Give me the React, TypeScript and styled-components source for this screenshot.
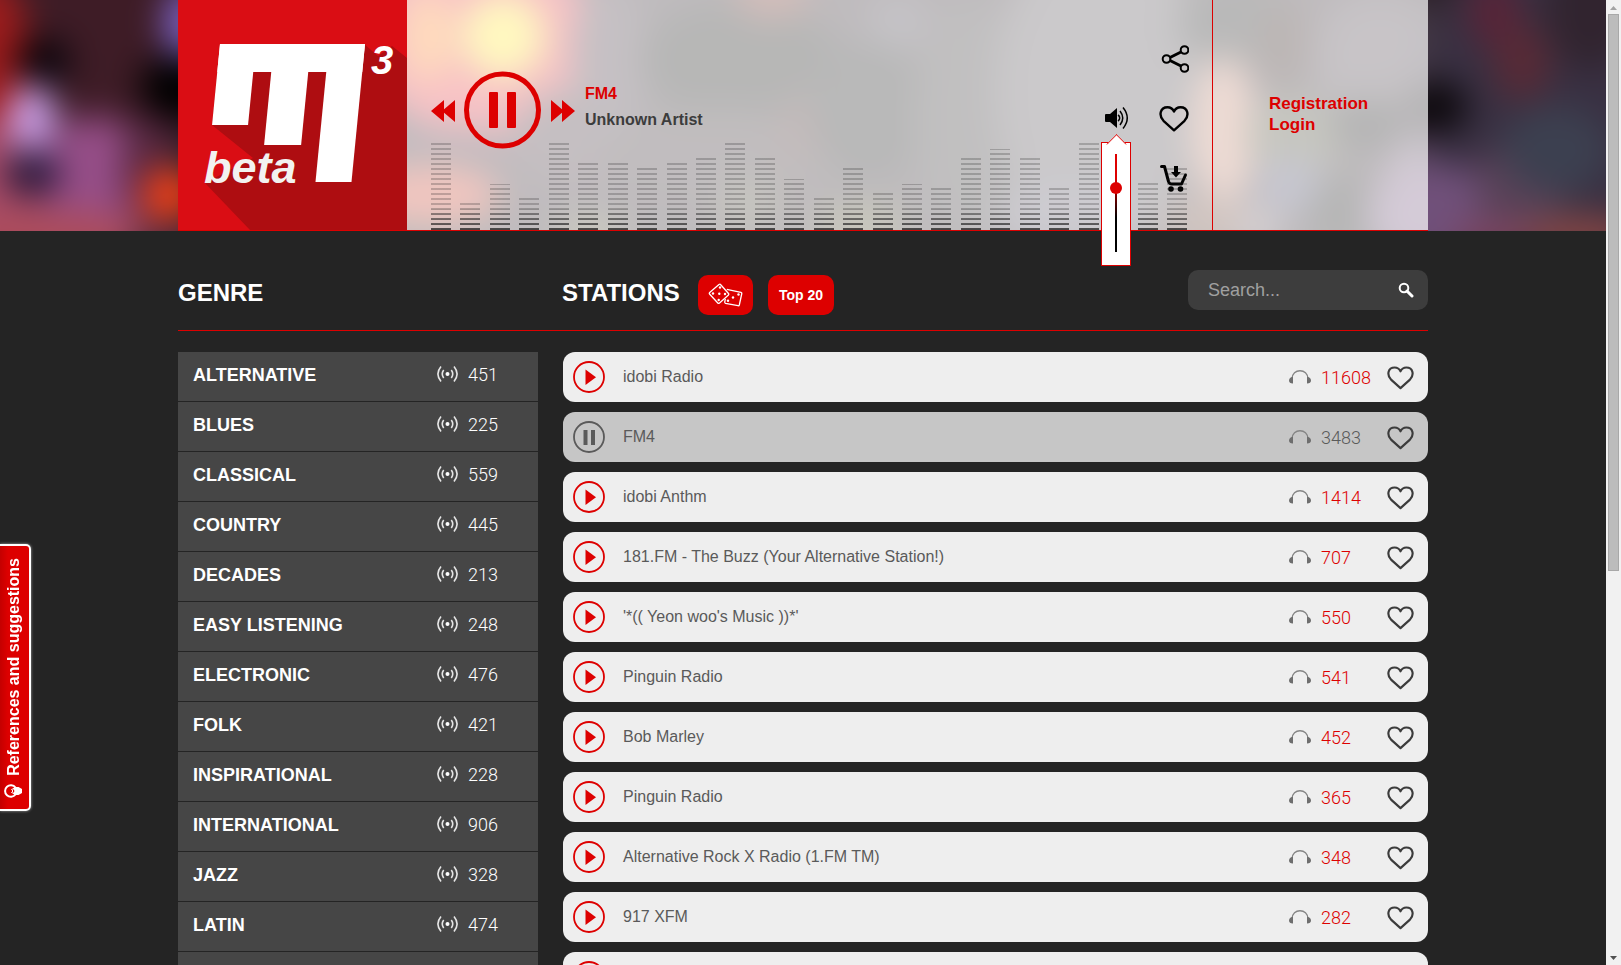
import React from 'react';
import styled, { createGlobalStyle } from 'styled-components';

const RED = '#dd0000';

const GlobalStyle = createGlobalStyle`
  * { box-sizing: border-box; }
  body {
    margin: 0;
    background: #242424;
    color: #fff;
    font-family: "Liberation Sans", Arial, Helvetica, sans-serif;
    font-size: 16px;
  }
  button { font: inherit; color: inherit; background: none; border: 0; padding: 0; cursor: pointer; }
  a { color: inherit; text-decoration: none; }
  ul { list-style: none; margin: 0; padding: 0; }
  svg { display: block; }
`;

/* ---------- page frame ---------- */

const Shell = styled.div`
  display: flex;
  height: 100vh;
`;

const Page = styled.div`
  flex: 1;
  min-width: 0;
  overflow: hidden;
`;

const ScrollRail = styled.div`
  display: flex;
  flex-direction: column;
  align-items: center;
  width: 15px;
  padding: 5px 0 4px;
  background: #f1f1f1;
`;

const ScrollThumb = styled.div`
  width: 11px;
  height: 557px;
  margin: 4px 0 auto;
  background: #bcbcbc;
  border: 1px solid #a8a8a8;
`;

const Container = styled.div`
  width: 100%;
  max-width: 1250px;
  margin: 0 auto;
`;

/* ---------- header ---------- */

const Header = styled.header`
  display: grid;
  > * { grid-area: 1 / 1; }
`;

const Backdrop = styled.svg`
  width: 100%;
  height: 231px;
`;

const HeaderPanel = styled(Container)`
  position: relative;
  display: flex;
  height: 231px;
  border-bottom: 1px solid ${RED};
`;

const Player = styled.section`
  flex: 1;
  min-width: 0;
  display: grid;
  background: rgba(255, 255, 255, 0.7);
  > * { grid-area: 1 / 1; }
`;

const Spectrum = styled.div`
  align-self: end;
  display: flex;
  justify-content: space-between;
  align-items: flex-end;
  padding: 0 25px 0 24px;
`;

const SpectrumBar = styled.span<{ $level: number }>`
  width: 20px;
  height: ${(p) => p.$level}px;
  background: linear-gradient(to top, rgba(20, 20, 20, 0.72), rgba(20, 20, 20, 0.4) 18px, rgba(20, 20, 20, 0.22) 22px);
  mask-image: repeating-linear-gradient(to top, #000 0 2px, transparent 2px 5px);
`;

const PlayerFront = styled.div`
  display: flex;
  justify-content: space-between;
  align-items: flex-start;
  padding: 0 23px 0 24px;
`;

const Transport = styled.div`
  display: flex;
  align-items: center;
  gap: 9px;
  padding-top: 71px;
  color: ${RED};
`;

const SkipButton = styled.button`
  padding-top: 2px;
`;

const NowPlaying = styled.div`
  align-self: flex-start;
  margin-top: 10px;
  padding-left: 1px;
  font-weight: bold;
  line-height: 26px;
`;

const StationTitle = styled.div`
  color: ${RED};
`;

const ArtistName = styled.div`
  color: #3c3c3c;
`;

const Actions = styled.div`
  display: flex;
  align-items: center;
  gap: 28px;
  padding-top: 29px;
  color: #000;
`;

const ActionColumn = styled.div`
  display: flex;
  flex-direction: column;
`;

const ActionButton = styled.button`
  display: flex;
  align-items: center;
  justify-content: center;
  width: 30px;
  height: 60px;
`;

const VolumeHolder = styled.div`
  position: relative;
`;

const VolumePopover = styled.div`
  position: absolute;
  z-index: 2;
  top: 53px;
  left: 0;
  display: flex;
  justify-content: center;
  width: 30px;
  height: 124px;
  padding-top: 11px;
  background: #fff;
  border: 1px solid ${RED};
  &::before {
    content: "";
    position: absolute;
    top: -8px;
    left: 7px;
    width: 14px;
    height: 14px;
    background: #fff;
    border: solid ${RED};
    border-width: 1px 0 0 1px;
    clip-path: polygon(0 0, 100% 0, 0 100%);
    transform: translateY(2px) rotate(45deg);
  }
`;

const VolumeSlider = styled.input`
  appearance: none;
  writing-mode: vertical-lr;
  direction: rtl;
  width: 12px;
  height: 98px;
  margin: 0;
  background: linear-gradient(${RED} 0 25%, #000 65%) center / 2px 100% no-repeat;
  &::-webkit-slider-thumb {
    appearance: none;
    width: 12px;
    height: 12px;
    border-radius: 50%;
    background: ${RED};
  }
`;

const Account = styled.nav`
  display: flex;
  flex-direction: column;
  flex: 0 0 216px;
  padding: 93px 0 0 56px;
  background: rgba(255, 255, 255, 0.7);
  border-left: 1px solid ${RED};
  color: ${RED};
  font-size: 17px;
  font-weight: bold;
  line-height: 21px;
`;

/* ---------- title bar ---------- */

const TitleBar = styled(Container)`
  display: flex;
  align-items: flex-start;
  gap: 15px;
  height: 100px;
  padding-top: 39px;
  border-bottom: 1px solid ${RED};
`;

const Title = styled.h2<{ $width: number }>`
  width: ${(p) => p.$width}px;
  margin: 0;
  font-size: 24px;
  line-height: 46px;
`;

const PillButton = styled.button<{ $width: number }>`
  display: flex;
  align-items: center;
  justify-content: center;
  width: ${(p) => p.$width}px;
  height: 40px;
  margin-top: 5px;
  border-radius: 10px;
  background: ${RED};
  font-size: 14px;
  font-weight: bold;
`;

const SearchForm = styled.form`
  display: flex;
  align-items: center;
  width: 240px;
  height: 40px;
  margin-left: auto;
  padding: 0 14px 0 20px;
  border-radius: 10px;
  background: #3d3d3d;
`;

const SearchInput = styled.input`
  flex: 1;
  min-width: 0;
  padding: 0;
  border: 0;
  outline: 0;
  background: none;
  color: #fff;
  font: inherit;
  font-size: 18px;
  &::placeholder { color: #a0a0a0; opacity: 1; }
`;

/* ---------- lists ---------- */

const Columns = styled(Container)`
  display: grid;
  grid-template-columns: 360px minmax(0, 1fr);
  gap: 25px;
  padding-top: 21px;
`;

const Count = styled.span`
  font-family: Roboto, "Liberation Sans", sans-serif;
  font-weight: 300;
  font-size: 18px;
`;

const GenreLink = styled.a`
  display: flex;
  align-items: center;
  height: 50px;
  padding: 0 0 4px 15px;
  background: #464646;
  border-bottom: 1px solid #242424;
  font-size: 18px;
  font-weight: bold;
`;

const GenreName = styled.span`
  padding-top: 2px;
`;

const GenreCount = styled.span`
  display: flex;
  align-items: center;
  gap: 10px;
  width: 101px;
  margin-left: auto;
`;

const StationList = styled.ul`
  display: flex;
  flex-direction: column;
  gap: 10px;
`;

const StationRow = styled.li<{ $active: boolean }>`
  display: flex;
  align-items: center;
  height: 50px;
  padding: 0 14px 0 10px;
  border-radius: 12px;
  background: ${(p) => (p.$active ? '#c6c6c6' : '#eeeeee')};
  color: ${(p) => (p.$active ? '#5a5a5a' : RED)};
`;

const StationName = styled.span`
  flex: 1;
  min-width: 0;
  padding: 0 18px;
  color: #5a5a5a;
  overflow: hidden;
  white-space: nowrap;
  text-overflow: ellipsis;
`;

const Listeners = styled.span`
  display: flex;
  align-items: center;
  gap: 10px;
  width: 98px;
`;

const HeartButton = styled.button`
  padding-top: 2px;
  color: #3c3c3c;
`;

/* ---------- feedback tab ---------- */

const FeedbackTab = styled.button`
  position: fixed;
  z-index: 3;
  top: 544px;
  left: 0;
  display: flex;
  flex-direction: column;
  align-items: flex-start;
  gap: 7px;
  width: 31px;
  height: 267px;
  padding: 12px 0 0 3px;
  border: 2px solid #fff;
  border-left: 0;
  border-radius: 0 5px 5px 0;
  background: linear-gradient(to right, #c40000, ${RED} 8px);
  box-shadow: 0 0 3px rgba(255, 255, 255, 0.6);
  font-weight: bold;
`;

const FeedbackLabel = styled.span`
  writing-mode: vertical-rl;
  transform: rotate(180deg);
  line-height: 21px;
`;

/* ---------- drawings ---------- */

type Blob = [number, number, number, number, string];

const BLOBS: Blob[] = [
  [90, 60, 140, 110, '#3e1c26'],
  [-14, 60, 44, 90, '#9c1c1c'],
  [0, 190, 80, 70, '#a84c68'],
  [95, 180, 54, 64, '#964e88'],
  [50, 240, 110, 30, '#ac4c5c'],
  [42, 62, 28, 24, '#08040a'],
  [32, 118, 24, 34, '#c8a0e8'],
  [32, 173, 28, 24, '#28183a'],
  [150, 170, 28, 54, '#562840'],
  [186, 25, 22, 40, '#7c64c8'],
  [178, 88, 38, 34, '#000000'],
  [170, 195, 28, 28, '#f04018'],
  [170, 244, 40, 14, '#5a2c48'],
  [480, 40, 116, 96, '#e43440'],
  [428, 36, 24, 46, '#ff8c20'],
  [503, 36, 42, 42, '#ffe82c'],
  [445, 150, 80, 22, '#341e2c'],
  [430, 195, 70, 30, '#d04028'],
  [570, 140, 60, 50, '#3c2832'],
  [608, 60, 36, 80, '#3e2e3a'],
  [590, 234, 36, 14, '#606030'],
  [740, 60, 100, 60, '#0e0e0c'],
  [772, -6, 38, 24, '#70241a'],
  [720, 155, 120, 46, '#302428'],
  [810, 125, 32, 32, '#3c1c1c'],
  [748, 205, 34, 24, '#403e28'],
  [870, 110, 60, 70, '#141414'],
  [898, 22, 30, 26, '#3e3844'],
  [860, 226, 50, 20, '#48481c'],
  [970, 120, 56, 120, '#302c2e'],
  [1100, 90, 106, 160, '#504a50'],
  [1070, 215, 74, 34, '#585264'],
  [1238, 25, 60, 44, '#161616'],
  [1224, 130, 32, 74, '#c88870'],
  [1208, 225, 44, 24, '#643c2c'],
  [1258, 228, 20, 20, '#806c74'],
  [1282, 45, 26, 44, '#200c08'],
  [1380, 55, 66, 64, '#463a44'],
  [1295, 135, 50, 38, '#42422c'],
  [1290, 185, 32, 28, '#444466'],
  [1366, 125, 36, 26, '#080808'],
  [1345, 214, 38, 36, '#0a0a08'],
  [1420, 190, 38, 54, '#624a66'],
  [1550, 100, 130, 170, '#393042'],
  [1440, 215, 74, 50, '#70507a'],
  [1520, 190, 44, 50, '#5a4258'],
  [1500, 240, 50, 20, '#7c4460'],
  [1434, 107, 34, 26, '#0c080c'],
  [1494, 12, 26, 36, '#582438'],
  [1522, 62, 28, 38, '#582a36'],
  [1556, 150, 54, 44, '#3c4050'],
  [1582, 238, 60, 24, '#804444'],
  [1590, 10, 44, 60, '#31242f'],
];

function HeaderBackdrop() {
  return (
    <Backdrop viewBox="0 0 1606 231" preserveAspectRatio="none" aria-hidden="true">
      <defs>
        <filter
          id="soft"
          filterUnits="userSpaceOnUse"
          x="-100"
          y="-100"
          width="1806"
          height="431"
          colorInterpolationFilters="sRGB"
        >
          <feGaussianBlur stdDeviation="17" />
        </filter>
      </defs>
      <g filter="url(#soft)">
        <rect x="-100" y="-100" width="1806" height="431" fill="#2a1e26" />
        {BLOBS.map(([cx, cy, rx, ry, fill], i) => (
          <ellipse key={i} cx={cx} cy={cy} rx={rx} ry={ry} fill={fill} />
        ))}
      </g>
    </Backdrop>
  );
}

const Logo = () => (
  <svg width="229" height="230" viewBox="0 0 229 230" role="img" aria-label="M3 beta">
    <rect width="229" height="230" fill="#da0d14" />
    <path d="M34 125L42 44H186L200 56L214 46L229 58V230H72L27 183L75 158Z" fill="#ae0d11" />
    <g fill="#fff" transform="translate(42 44) skewX(-5.6)">
      <rect width="145" height="28" />
      <rect width="36" height="81" />
      <rect x="54" width="37" height="101" />
      <rect x="109" width="36" height="138" />
    </g>
    <g fill="#f2f2f0" fontFamily="Liberation Sans, Arial, sans-serif" fontWeight="bold" fontStyle="italic">
      <text x="26" y="183" fontSize="45">beta</text>
      <text x="193" y="74" fontSize="40" fill="#fff">3</text>
    </g>
  </svg>
);

const SkipIcon = ({ back }: { back?: boolean }) => (
  <svg width="24" height="22" viewBox="0 0 24 22" fill="currentColor">
    <path d={back ? 'M13 0V22L0 11ZM24 0V22L11 11Z' : 'M0 0V22L13 11ZM11 0V22L24 11Z'} />
  </svg>
);

const BigPauseIcon = () => (
  <svg width="78" height="78" viewBox="0 0 78 78">
    <circle cx="38.500" cy="39" r="36" fill="none" stroke="currentColor" strokeWidth="5" />
    <rect x="25" y="21" width="9" height="36" rx="1" fill="currentColor" />
    <rect x="43" y="21" width="9" height="36" rx="1" fill="currentColor" />
  </svg>
);

const ShareIcon = () => (
  <svg width="30" height="28" viewBox="0 0 30 28" fill="none" stroke="currentColor">
    <path d="M11 12.500L22 7M11 15.500L22 21" strokeWidth="3" />
    <g strokeWidth="2">
      <circle cx="7.500" cy="14" r="3.800" />
      <circle cx="25.500" cy="5" r="3.800" />
      <circle cx="25.500" cy="23" r="3.800" />
    </g>
  </svg>
);

const HeartIcon = ({ width, height }: { width: number; height: number }) => (
  <svg width={width} height={height} viewBox="0 0 30 26" fill="none" stroke="currentColor" strokeWidth="2.4">
    <path d="M15 24.300L4.500 14.800C-.5 9.500 1 1.300 8.500 1.300C12 1.300 14 3.400 15 5.600C16 3.400 18 1.300 21.500 1.300C29 1.300 30.500 9.500 25.500 14.800Z" strokeLinejoin="round" />
  </svg>
);

const CartIcon = () => (
  <svg width="30" height="30" viewBox="0 0 30 30" fill="none" stroke="currentColor" strokeLinecap="round" strokeLinejoin="round">
    <path d="M2.500 2.500H5.500L9.500 17.500Q10.500 20 12.500 20H22.500L26.500 11" strokeWidth="3" />
    <path d="M17 2V8" strokeWidth="4" strokeLinecap="butt" />
    <path d="M12 8H22L17 13.500Z" fill="currentColor" stroke="none" />
    <circle cx="12" cy="25" r="2.800" fill="currentColor" stroke="none" />
    <circle cx="21.500" cy="25" r="2.800" fill="currentColor" stroke="none" />
  </svg>
);

const SpeakerIcon = () => (
  <svg width="28" height="24" viewBox="0 0 28 24" fill="none" stroke="currentColor">
    <path d="M3 8Q3 7 4 7H8L15 1V21L8 15H4Q3 15 3 14Z" fill="currentColor" stroke="none" />
    <path d="M16 8A3.500 3.500 0 0 1 16 14M18 4Q23.500 11 18 18M21 .5Q29.500 11 21 21.500" strokeWidth="1.500" />
  </svg>
);

const SignalIcon = () => (
  <svg width="21" height="18" viewBox="0 0 21 18" fill="none" stroke="#e6e6e6" strokeWidth="1.600">
    <circle cx="10.500" cy="8" r="2" fill="#fff" stroke="none" />
    <path d="M6.700 4Q3.800 8 6.700 12M14.300 4Q17.200 8 14.300 12M4 .5Q-2.200 8 4 15.500M17 .5Q23.200 8 17 15.500" />
  </svg>
);

const HeadphonesIcon = () => (
  <svg width="22" height="14" viewBox="0 0 22 14" fill="none">
    <path d="M3 9C3 -2 19 -2 19 9" stroke="#858585" strokeWidth="1.300" />
    <path d="M4 6.500V13.500Q0 13.500 0 10.500Q0 7.500 4 6.500ZM18 6.500V13.500Q22 13.500 22 10.500Q22 7.500 18 6.500Z" fill="#6e6e6e" />
  </svg>
);

const RowPlayIcon = ({ paused }: { paused: boolean }) => (
  <svg width="32" height="32" viewBox="0 0 32 32">
    <circle cx="16" cy="16" r="15" fill="none" stroke="currentColor" strokeWidth="1.800" />
    {paused ? (
      <path d="M12.500 9V24M20 9V24" stroke="currentColor" strokeWidth="4" />
    ) : (
      <path d="M12.500 8.500V24L23 16.200Z" fill="currentColor" />
    )}
  </svg>
);

const DiceIcon = () => (
  <svg width="35" height="24" viewBox="0 0 35 24" fill="none" stroke="#fff" strokeWidth="1.300" strokeLinejoin="round">
    <path d="M12.500 1.500L20.500 10.500Q21 11.200 20.500 12L11.500 20Q10.500 20.800 9.800 20L1.500 11Q1 10.200 1.700 9.500L11 1.500Q12 .8 12.500 1.500Z" />
    <path d="M18.800 6.300L33 9.300Q34 9.600 33.800 10.500L31.300 22Q31 23 30 22.700L17.500 20.300Q16.500 20 16.800 19L17.300 16" />
    <g fill="#fff" stroke="none">
      <circle cx="12" cy="4.500" r="1.200" /><circle cx="5" cy="10.500" r="1.200" /><circle cx="11.300" cy="10.800" r="1.200" />
      <circle cx="17" cy="11" r="1.200" /><circle cx="10.700" cy="17" r="1.200" /><circle cx="30.500" cy="11.500" r="1.200" />
      <circle cx="25" cy="14.500" r="1.200" /><circle cx="20" cy="17.700" r="1.200" />
    </g>
  </svg>
);

const SearchIcon = () => (
  <svg width="16" height="16" viewBox="0 0 16 16" fill="none" stroke="#fff">
    <circle cx="6" cy="6" r="4.300" strokeWidth="2" />
    <path d="M9 9L14 14" strokeWidth="3" strokeLinecap="round" />
  </svg>
);

const BulbIcon = () => (
  <svg width="20" height="16" viewBox="0 0 20 16" fill="none" stroke="#fff">
    <path d="M12.500 4.500A5.800 5.800 0 1 0 12.500 11.500" strokeWidth="2" />
    <path d="M11.500 4H15.500L19 6V10L15.500 12H11.500L10 10.500L11.500 8L10 5.500Z" fill="#fff" stroke="none" />
    <path d="M11 5.500L8.500 6.500L10 8L8.500 9.500L11 10.500" strokeWidth="1" />
  </svg>
);

/* ---------- data ---------- */

const LEVELS = [87, 27, 46, 32, 87, 67, 67, 62, 67, 72, 87, 72, 51, 32, 62, 37, 46, 42, 72, 81, 72, 42, 87, 57, 47, 62];

const GENRES: [string, number][] = [
  ['ALTERNATIVE', 451], ['BLUES', 225], ['CLASSICAL', 559], ['COUNTRY', 445], ['DECADES', 213],
  ['EASY LISTENING', 248], ['ELECTRONIC', 476], ['FOLK', 421], ['INSPIRATIONAL', 228],
  ['INTERNATIONAL', 906], ['JAZZ', 328], ['LATIN', 474],
];

const STATIONS: [string, number][] = [
  ['idobi Radio', 11608], ['FM4', 3483], ['idobi Anthm', 1414],
  ['181.FM - The Buzz (Your Alternative Station!)', 707], ["'*(( Yeon woo's Music ))*'", 550],
  ['Pinguin Radio', 541], ['Bob Marley', 452], ['Pinguin Radio', 365],
  ['Alternative Rock X Radio (1.FM TM)', 348], ['917 XFM', 282],
];

const CURRENT = 1;

export default function App() {
  return (
    <Shell>
      <GlobalStyle />
      <Page>
        <Header>
          <HeaderBackdrop />
          <HeaderPanel>
            <a href="#home"><Logo /></a>
            <Player>
              <Spectrum aria-hidden="true">
                {LEVELS.map((level, i) => <SpectrumBar key={i} $level={level} />)}
              </Spectrum>
              <PlayerFront>
                <Transport>
                  <SkipButton aria-label="Previous"><SkipIcon back /></SkipButton>
                  <button aria-label="Pause"><BigPauseIcon /></button>
                  <SkipButton aria-label="Next"><SkipIcon /></SkipButton>
                  <NowPlaying>
                    <StationTitle>FM4</StationTitle>
                    <ArtistName>Unknown Artist</ArtistName>
                  </NowPlaying>
                </Transport>
                <Actions>
                  <VolumeHolder>
                    <ActionButton aria-label="Mute"><SpeakerIcon /></ActionButton>
                    <VolumePopover>
                      <VolumeSlider type="range" min={0} max={100} defaultValue={67} aria-label="Volume" />
                    </VolumePopover>
                  </VolumeHolder>
                  <ActionColumn>
                    <ActionButton aria-label="Share"><ShareIcon /></ActionButton>
                    <ActionButton aria-label="Favourite"><HeartIcon width={30} height={26} /></ActionButton>
                    <ActionButton aria-label="Buy"><CartIcon /></ActionButton>
                  </ActionColumn>
                </Actions>
              </PlayerFront>
            </Player>
            <Account>
              <a href="#registration">Registration</a>
              <a href="#login">Login</a>
            </Account>
          </HeaderPanel>
        </Header>

        <TitleBar>
          <Title $width={369}>GENRE</Title>
          <Title $width={121}>STATIONS</Title>
          <PillButton $width={55} aria-label="Random station"><DiceIcon /></PillButton>
          <PillButton $width={66}>Top 20</PillButton>
          <SearchForm role="search">
            <SearchInput type="text" placeholder="Search..." aria-label="Search" />
            <button type="button" aria-label="Start search"><SearchIcon /></button>
          </SearchForm>
        </TitleBar>

        <Columns>
          <ul>
            {GENRES.map(([name, count]) => (
              <li key={name}>
                <GenreLink href={`#${name.toLowerCase()}`}>
                  <GenreName>{name}</GenreName>
                  <GenreCount><SignalIcon /><Count>{count}</Count></GenreCount>
                </GenreLink>
              </li>
            ))}
            <li><GenreLink href="#more" aria-label="More genres" /></li>
          </ul>
          <StationList>
            {STATIONS.map(([name, listeners], i) => (
              <StationRow key={i} $active={i === CURRENT}>
                <button aria-label={i === CURRENT ? 'Pause' : 'Play'}><RowPlayIcon paused={i === CURRENT} /></button>
                <StationName>{name}</StationName>
                <Listeners><HeadphonesIcon /><Count>{listeners}</Count></Listeners>
                <HeartButton aria-label="Favourite"><HeartIcon width={27} height={24} /></HeartButton>
              </StationRow>
            ))}
            <StationRow $active={false}>
              <button aria-label="Play"><RowPlayIcon paused={false} /></button>
            </StationRow>
          </StationList>
        </Columns>
      </Page>

      <ScrollRail aria-hidden="true">
        <svg width="7" height="5" viewBox="0 0 7 5"><path d="M0 5L3.500 1L7 5Z" fill="#a3a3a3" /></svg>
        <ScrollThumb />
        <svg width="7" height="5" viewBox="0 0 7 5"><path d="M0 0L3.500 4L7 0Z" fill="#505050" /></svg>
      </ScrollRail>

      <FeedbackTab>
        <FeedbackLabel>References and suggestions</FeedbackLabel>
        <BulbIcon />
      </FeedbackTab>
    </Shell>
  );
}
